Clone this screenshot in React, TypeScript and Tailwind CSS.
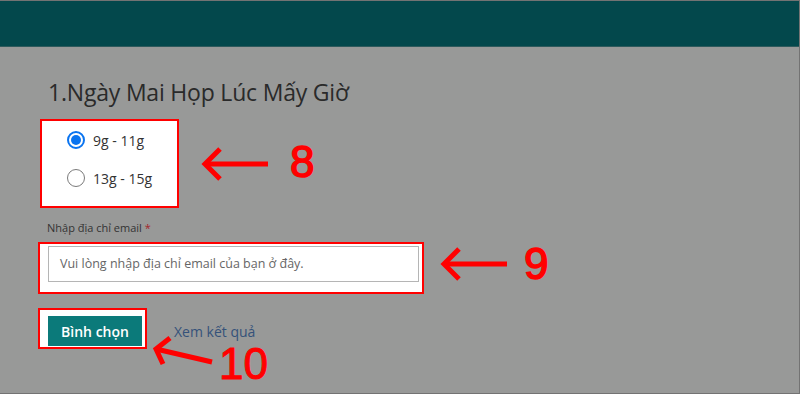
import React from 'react'

const ui = { fontFamily: '"Open Sans", "Noto Sans", sans-serif' }
const mark = { fontFamily: '"Liberation Sans", Arial, sans-serif' }

function Arrow({ className, points }: { className: string; points: { tip: [number, number]; tail: [number, number]; a: [number, number]; b: [number, number] } }) {
  const { tip, tail, a, b } = points
  return (
    <svg className={className} width="800" height="394" viewBox="0 0 800 394" fill="none">
      <path d={`M${tip[0]} ${tip[1]} L${tail[0]} ${tail[1]}`} stroke="#ff0000" strokeWidth="5" />
      <path d={`M${a[0]} ${a[1]} L${tip[0]} ${tip[1]} L${b[0]} ${b[1]}`} stroke="#ff0000" strokeWidth="5" strokeLinecap="butt" strokeLinejoin="miter" />
    </svg>
  )
}

function Radio({ checked, label }: { checked?: boolean; label: string }) {
  return (
    <div className="flex items-center gap-[8px] h-[20px]">
      {checked ? (
        <span className="w-[18px] h-[18px] rounded-full border-2 border-[#0a74f0] flex items-center justify-center bg-white">
          <span className="w-[10px] h-[10px] rounded-full bg-[#0a74f0]" />
        </span>
      ) : (
        <span className="w-[18px] h-[18px] rounded-full border border-[#7a7a7a] bg-white" />
      )}
      <span className="text-[14px] text-[#333333]">{label}</span>
    </div>
  )
}

export default function App() {
  return (
    <div className="relative w-[800px] h-[394px] overflow-hidden bg-[#989998] border-t border-r border-b border-[#737373]" style={ui}>
      <div className="h-[46px] bg-[#03484c] border-b border-[#2e5a5c]" />

      <div className="pl-[38px] pt-[29px]">
        <h1 className="ml-[10px] text-[23px] leading-[32px] tracking-[-0.2px] text-[#2a2a2a]">1.Ngày Mai Họp Lúc Mấy Giờ</h1>

        <div className="mt-[11px] ml-[2px] w-[139px] h-[89px] border-2 border-[#ff0000] bg-white pl-[25px] pt-[9px] flex flex-col gap-[18px]">
          <Radio checked label="9g - 11g" />
          <Radio label="13g - 15g" />
        </div>

        <div className="mt-[12px] ml-[9px] text-[11px] leading-[16px] text-[#333333]">
          Nhập địa chỉ email <span className="text-[#a4262c]">*</span>
        </div>

        <div className="mt-[6px] w-[386px] border-2 border-[#ff0000] bg-white pl-[8px] pr-[3px] pt-[2px] pb-[10px]">
          <div className="h-[36px] border border-[#b5b5b5] flex items-center pl-[11px] text-[12.5px] text-[#666666]">
            Vui lòng nhập địa chỉ email của bạn ở đây.
          </div>
        </div>

        <div className="mt-[14px] flex items-center">
          <div className="w-[109px] border-2 border-[#ff0000] bg-white pl-[8px] pr-[3px] pt-[6px] pb-[1px]">
            <button className="w-[94px] h-[30px] bg-[#0b7a7a] text-white text-[14px] font-semibold">Bình chọn</button>
          </div>
          <a className="ml-[27px] mt-[6px] text-[14px] leading-[18px] text-[#35527a]">Xem kết quả</a>
        </div>
      </div>

      <Arrow className="absolute left-0 top-0 pointer-events-none" points={{ tip: [205, 163], tail: [268, 163], a: [220, 148], b: [220, 178] }} />
      <Arrow className="absolute left-0 top-0 pointer-events-none" points={{ tip: [444, 263], tail: [507, 263], a: [459, 248], b: [459, 278] }} />
      <Arrow className="absolute left-0 top-0 pointer-events-none" points={{ tip: [156, 348], tail: [212, 361], a: [170, 337], b: [163, 363] }} />

      <span className="absolute left-[290px] top-[139px] text-[44px] leading-none text-[#ff0000] [-webkit-text-stroke:1.5px_#ff0000]" style={mark}>8</span>
      <span className="absolute left-[524px] top-[241px] text-[44px] leading-none text-[#ff0000] [-webkit-text-stroke:1.5px_#ff0000]" style={mark}>9</span>
      <span className="absolute left-[219px] top-[341px] text-[44px] leading-none text-[#ff0000] [-webkit-text-stroke:1px_#ff0000]" style={mark}>10</span>
    </div>
  )
}
